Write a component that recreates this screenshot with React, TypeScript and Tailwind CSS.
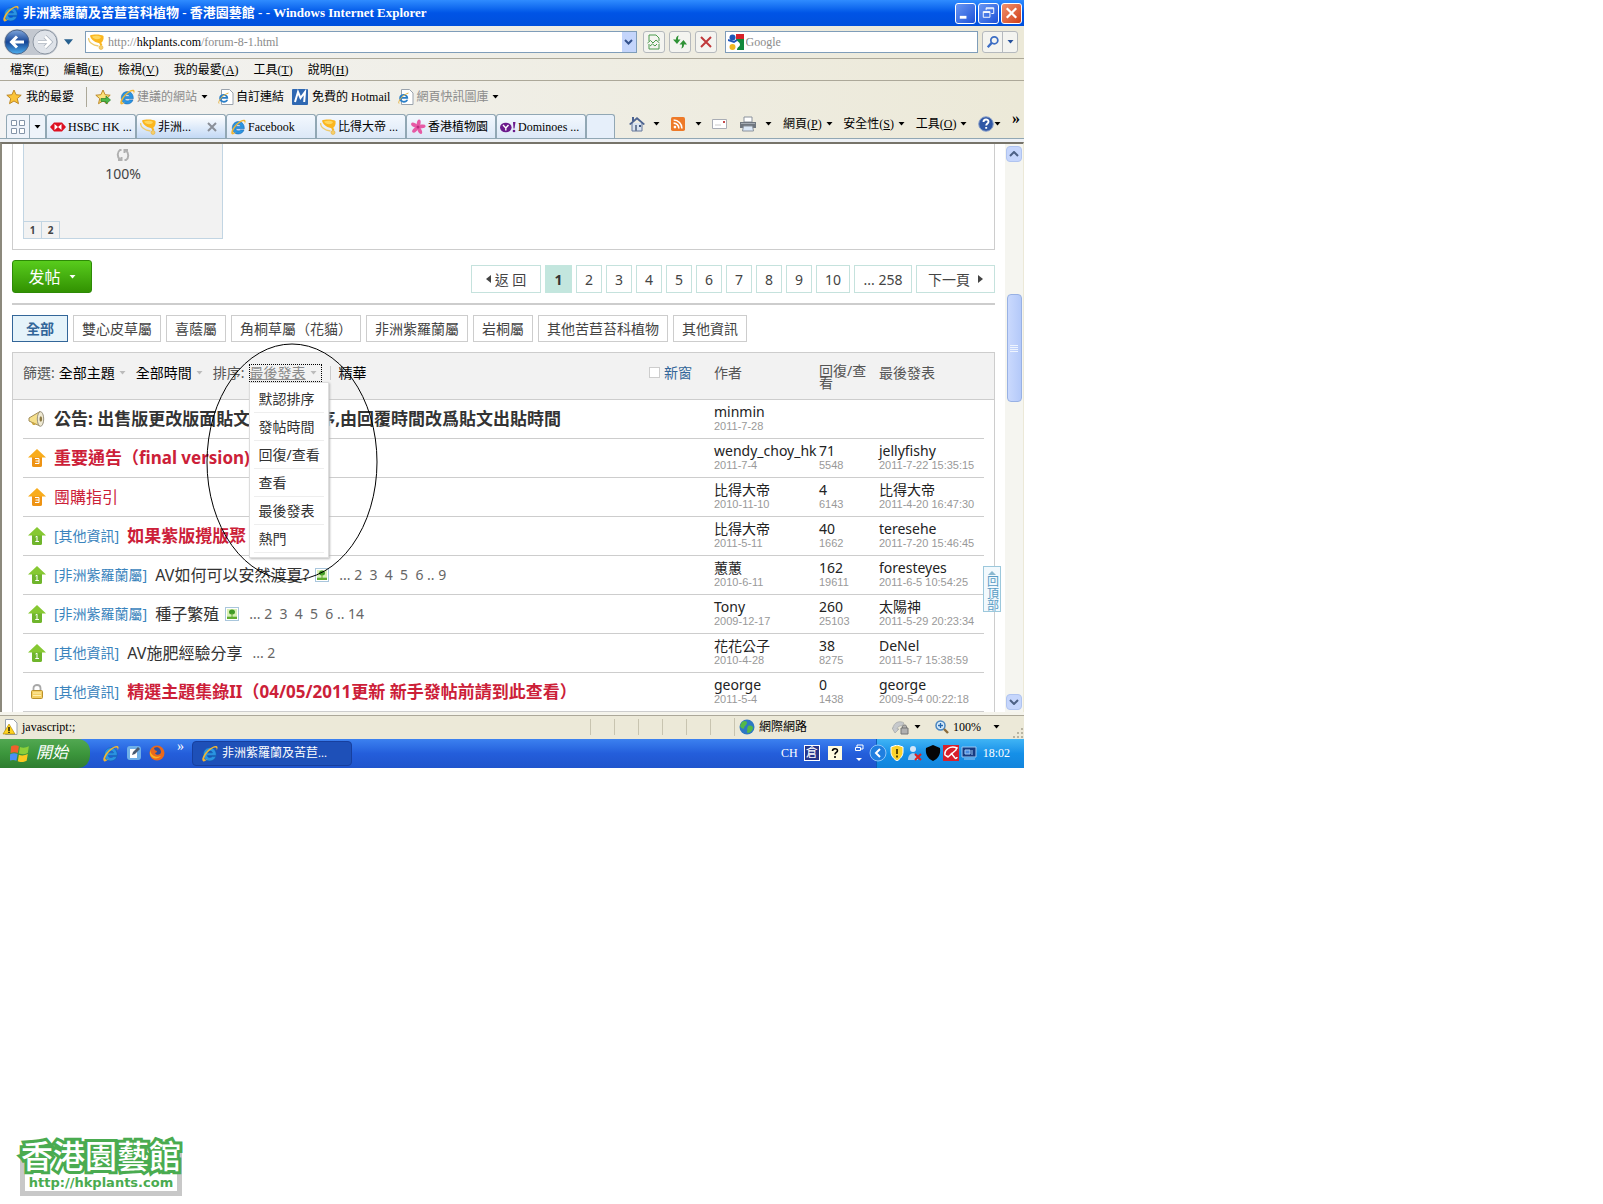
import type { ReactNode } from 'react';
import clsx from 'clsx';

const UI = "font-['Liberation_Serif','Noto_Sans_CJK_TC',serif]";
const WEB = "font-['Noto_Sans','Noto_Sans_CJK_TC',sans-serif]";

/* ---------- icons ---------- */

function IeIcon({ className = 'size-4' }: { className?: string }) {
  return (
    <svg viewBox="0 0 16 16" className={clsx('shrink-0', className)} aria-hidden="true">
      <path d="M14.300 9.800H5.900c.2 1.400 1.200 2 2.500 2 1 0 1.700-.3 2.100-.9h3.500c-.9 2.600-3 4.100-5.700 4.100-3.600 0-6-2.500-6-6.100s2.500-6.300 6.100-6.300c3.700 0 6.100 2.700 5.900 7.200zM5.900 7.400h4.900C10.600 6.300 9.700 5.700 8.400 5.700S6.200 6.300 5.900 7.400z" fill="#2a94e2" stroke="#1560a8" strokeWidth=".5" />
      <path d="M2 15.300C-.2 14 2.600 8.600 6.300 5 9.900 1.600 13.800 0 15.200 1.300c.8.900.3 2.300-.6 3.900.3-1.500.2-2.300-.5-2.700-1.400-.8-4.600 1-7.400 4-2.600 2.900-4.200 6-3.300 7 .5.500 1.500.3 2.700-.4-1.600 1.600-3.200 2.800-4.100 2.200z" fill="#f2b632" />
    </svg>
  );
}

function CupIcon() {
  return (
    <svg viewBox="0 0 16 16" className="size-4 shrink-0" aria-hidden="true">
      <path d="M2 1.500C5 0 13 0 15.500 2c.5 3-.5 5.500-2.500 7C9 9.500 3 6.500 2 1.500z" fill="#fbb61f" />
      <path d="M4 2.500c3-1 7-.8 9 .5-1 3-7 3-9-.5z" fill="#ffd75e" />
      <path d="M.5 4c0 4 4 7.500 10 8" fill="none" stroke="#efcb6e" strokeWidth="1.300" />
      <path d="M12 8.500l1.500 3" stroke="#fbb61f" strokeWidth="2" />
      <circle cx="13" cy="13.500" r="2" fill="#f6cf6a" stroke="#e6b03c" strokeWidth=".6" />
    </svg>
  );
}

function StarIcon({ add = false }: { add?: boolean }) {
  return (
    <svg viewBox="0 0 16 16" className="size-4 shrink-0" aria-hidden="true">
      <path d="M8 1l2.100 4.700 5.100.5-3.900 3.400 1.200 5.100L8 12l-4.500 2.700 1.200-5.100L.8 6.200l5.100-.5z" fill={add ? '#fbe27a' : '#fcc438'} stroke="#b8801c" strokeWidth=".9" />
      {add && <path d="M6 9.500h5V7l4.500 4-4.500 4v-2.500H6z" fill="#4cb848" stroke="#2b7d2a" strokeWidth=".7" />}
    </svg>
  );
}

function PageIcon({ children }: { children?: ReactNode }) {
  return (
    <svg viewBox="0 0 16 16" className="size-4 shrink-0" aria-hidden="true">
      <path d="M3.500.5h8L15 4v11.500H3.500z" fill="#fff" stroke="#9aa3ad" />
      {children || (
        <>
          <path d="M10.200 9.700H3.500c.3 2.600 3.800 2.800 4.600 1h2C9 15 1.200 14.600 1.200 9.300c0-5.600 9.200-5.700 9 .4zM3.600 8h4.300C7.500 6 4 6 3.600 8z" fill="#2a7fc8" />
          <path d="M1 14.500C-.5 13 4 6 10.500 4" stroke="#e5b544" fill="none" />
        </>
      )}
    </svg>
  );
}

function HotmailIcon() {
  return (
    <svg viewBox="0 0 16 16" className="size-4 shrink-0" aria-hidden="true">
      <rect width="16" height="16" rx="1" fill="#2f68b2" />
      <path d="M3 13L6 3l2.500 6L13 3l-.8 10" fill="none" stroke="#fff" strokeWidth="2" />
    </svg>
  );
}

function HsbcIcon() {
  return (
    <svg viewBox="0 0 16 16" className="size-4 shrink-0" aria-hidden="true">
      <path d="M4 3.500h8L16 8l-4 4.500H4L0 8z" fill="#dd1122" />
      <path d="M4.500 5L8 8l3.500-3v6L8 8l-3.500 3z" fill="#fff" />
    </svg>
  );
}

function FlowerIcon() {
  return (
    <svg viewBox="0 0 16 16" className="size-4 shrink-0" aria-hidden="true">
      {[10, 82, 154, 226, 298].map((a) => (
        <ellipse key={a} cx="8" cy="4.300" rx="1.900" ry="4" fill="#e65aa5" transform={`rotate(${a} 8 8)`} />
      ))}
      <circle cx="8" cy="8" r="1.500" fill="#c02a80" />
    </svg>
  );
}

function YahooIcon() {
  return (
    <svg viewBox="0 0 16 16" className="size-4 shrink-0" aria-hidden="true">
      <ellipse cx="5.800" cy="8.500" rx="5.800" ry="4.800" fill="#6b1a8c" />
      <path d="M3 6l2.800 3L8.500 6M5.800 9v2.500" stroke="#fff" strokeWidth="1.400" fill="none" />
      <path d="M13 3h2.500l-1 6.500h-1z" fill="#6b1a8c" />
      <circle cx="14" cy="12" r="1.300" fill="#6b1a8c" />
    </svg>
  );
}

function UpIcon({ level }: { level: 1 | 3 }) {
  const sticky = level === 3;
  return (
    <svg viewBox="0 0 18 18" className="size-[18px] shrink-0" aria-hidden="true">
      <path d="M9 0l9 8.500h-4V16c0 1.300-.7 2-2 2H6c-1.300 0-2-.7-2-2V8.500H0z" fill={sticky ? '#f8ac1c' : '#86c832'} />
      <path d="M4 8.500h10V16c0 1.300-.7 2-2 2H6c-1.300 0-2-.7-2-2z" fill={sticky ? '#ee9314' : '#6fb52c'} />
      {sticky ? (
        <path d="M7 9.500h4v5H7M7.500 12H11" fill="none" stroke="#fff" />
      ) : (
        <path d="M7.500 10l1.500-.8v5.300M7.300 14.500h3.700" fill="none" stroke="#fff" />
      )}
    </svg>
  );
}

function HornIcon() {
  return (
    <svg viewBox="0 0 18 18" className="size-[18px] shrink-0" aria-hidden="true">
      <path d="M1 8l11-6.500c2 3 2 11 0 14.500L1 11z" fill="#f6e08c" stroke="#a08c5a" />
      <ellipse cx="12.500" cy="9" rx="3.200" ry="7.300" fill="#efe9d2" stroke="#9a9482" />
      <ellipse cx="12.800" cy="9" rx="1.300" ry="2.800" fill="#8e7b45" />
      <path d="M3 12l2 3h2.500L7 13" fill="#cba640" />
    </svg>
  );
}

function LockIcon() {
  return (
    <svg viewBox="0 0 18 18" className="size-[18px] shrink-0" aria-hidden="true">
      <path d="M5.500 8V5C5.500 1 12.500 1 12.500 5v3" fill="none" stroke="#a8a8a8" strokeWidth="1.800" />
      <rect x="3.500" y="7.500" width="11" height="8" rx="1" fill="#f4cf63" stroke="#b98f2c" />
      <path d="M5 10h8M5 12.500h8" stroke="#fff0b0" />
    </svg>
  );
}

function ImageIcon() {
  return (
    <svg viewBox="0 0 14 14" className="size-3.5 shrink-0" aria-label="圖片附件" role="img">
      <rect x=".5" y=".5" width="13" height="13" fill="#fff" stroke="#a9c6dc" />
      <rect x="2" y="2" width="10" height="7" fill="#d8efb4" />
      <ellipse cx="7" cy="5" rx="3" ry="2.500" fill="#3f9a26" />
      <path d="M6.500 6h1v3.500h-1zM2 9.500h10V12H2z" fill="#5fae2e" />
    </svg>
  );
}

function Caret({ className = 'fill-black' }: { className?: string }) {
  return (
    <svg viewBox="0 0 7 4" className={clsx('h-1 w-[7px] shrink-0', className)} aria-hidden="true">
      <path d="M.5 0h6l-3 3.500z" />
    </svg>
  );
}

/* ---------- browser chrome ---------- */

function TitleBar() {
  const btn = 'flex size-[21px] items-center justify-center rounded-[3px] border border-white';
  return (
    <header className="flex h-[26px] items-center gap-0.5 bg-linear-to-b from-[#2f8cff] via-[#0054e6] to-[#0050dc] pr-0.5 pl-0.5">
      <IeIcon className="size-[17px]" />
      <h1 className="ml-0.5 flex-1 truncate text-[13px] font-bold text-white">非洲紫羅蘭及苦苣苔科植物 - 香港園藝館 - - Windows Internet Explorer</h1>
      <button aria-label="最小化" className={clsx(btn, 'bg-linear-to-br from-[#6a96f2] to-[#1d50d8]')}>
        <svg viewBox="0 0 20 20" className="size-5"><path d="M4 13h7v3H4z" fill="#fff" /></svg>
      </button>
      <button aria-label="還原" className={clsx(btn, 'bg-linear-to-br from-[#6a96f2] to-[#1d50d8]')}>
        <svg viewBox="0 0 20 20" className="size-5" fill="none" stroke="#fff"><path d="M7.500 7V4.500h8v6H13M7.500 5.500h8M4.500 8.500h7v6h-7zM4.500 9.500h7" /></svg>
      </button>
      <button aria-label="關閉" className={clsx(btn, 'bg-linear-to-br from-[#f0906c] to-[#d03c10]')}>
        <svg viewBox="0 0 20 20" className="size-5"><path d="M5 5l10 10M15 5L5 15" stroke="#fff" strokeWidth="2.400" /></svg>
      </button>
    </header>
  );
}

function AddressBar() {
  const tool = 'flex size-[22px] items-center justify-center rounded-[3px] border border-[#b5b9bd] bg-[#f4f4f0]';
  return (
    <div className="flex h-[33px] items-center border-b border-[#aca899] pr-1.5 pl-1">
      <div className="flex items-center gap-0.5 rounded-full bg-[#c3c8d0]">
        <button aria-label="上一頁">
          <svg viewBox="0 0 26 26" className="size-[26px]">
            <defs>
              <linearGradient id="back" x1="0" y1="0" x2="0" y2="1">
                <stop offset="0" stopColor="#7fa6dc" />
                <stop offset=".5" stopColor="#154596" />
                <stop offset="1" stopColor="#4fb0f0" />
              </linearGradient>
            </defs>
            <circle cx="13" cy="13" r="12" fill="url(#back)" stroke="#50688c" />
            <path d="M20 13H8M13 7.500L7.500 13l5.500 5.500" fill="none" stroke="#fff" strokeWidth="3" />
          </svg>
        </button>
        <button aria-label="下一頁">
          <svg viewBox="0 0 26 26" className="size-[26px]">
            <circle cx="13" cy="13" r="12" fill="#dfe3e9" stroke="#8d96a2" />
            <path d="M6 13h12M13 7.500l5.500 5.500-5.500 5.500" fill="none" stroke="#aab2bd" strokeWidth="4" />
            <path d="M6 13h12M13 7.500l5.500 5.500-5.500 5.500" fill="none" stroke="#fff" strokeWidth="2.500" />
          </svg>
        </button>
      </div>
      <button aria-label="最近的頁面" className="pr-1 pl-1.5">
        <svg viewBox="0 0 10 6" className="h-1.5 w-[9px]"><path d="M0 0h10L5 6z" fill="#27608f" /></svg>
      </button>
      <div className="ml-2 flex h-[22px] flex-1 items-center border border-[#7f9db9] bg-white pl-0.5">
        <CupIcon />
        <div className="ml-1 flex-1 text-[12px] text-[#8b8b8b]">
          http://<span className="text-black">hkplants.com</span>/forum-8-1.html
        </div>
        <button aria-label="網址清單" className="flex h-5 w-3.5 items-center justify-center bg-[#c4d5fb]">
          <svg viewBox="0 0 9 6" className="h-1.5 w-[9px]"><path d="M1 1l3.500 3.500L8 1" fill="none" stroke="#33518c" strokeWidth="2" /></svg>
        </button>
      </div>
      <div className="ml-1.5 flex gap-1">
        <button aria-label="相容性檢視" className={tool}>
          <svg viewBox="0 0 16 16" className="size-4" fill="none" stroke="#4a9a4c"><path d="M3 7V1h7l3 3v3M3 10v5h10v-5M1.500 9l3-2.500L7 9l3-3 3.500 3M4 12l2.500-2L9 12l2-2" /></svg>
        </button>
        <button aria-label="重新整理" className={tool}>
          <svg viewBox="0 0 16 16" className="size-4" fill="#2f9235"><path d="M7 1.500C4.500 2 4 3.500 4 5.500H1L5 10l3.500-4.500H6C6 4 6 2.500 7 1.500zM9 14.500c2.500-.5 3-2 3-4h3L11.500 6 7.500 10.500H10c0 1.500 0 3-1 4z" /></svg>
        </button>
        <button aria-label="停止" className={tool}>
          <svg viewBox="0 0 16 16" className="size-4"><path d="M3 3l10 10M13 3L3 13" stroke="#c0393b" strokeWidth="2" /></svg>
        </button>
      </div>
      <div className="ml-2 flex h-[22px] w-1/4 items-center border border-[#7f9db9] bg-white pl-0.5">
        <svg viewBox="0 0 16 16" className="size-4 shrink-0" aria-hidden="true">
          <path d="M8 0h8v5H8z" fill="#d8232a" />
          <path d="M16 5v11H9c0-3 3-3 3-5.500S8 7 8 5z" fill="#12893c" />
          <circle cx="4.500" cy="3.500" r="3" fill="#2158b8" />
          <circle cx="4.500" cy="13" r="3" fill="#f0b820" />
          <path d="M0 6l6 2 3-2" stroke="#2158b8" fill="none" strokeWidth="2" />
        </svg>
        <input aria-label="搜尋" placeholder="Google" className="ml-0.5 min-w-0 flex-1 text-[12px] outline-none placeholder:text-[#8b8b8b]" />
      </div>
      <div className="ml-1 flex h-[22px] rounded-[3px] border border-[#b5b9bd] bg-[#f4f4f0]">
        <button aria-label="開始搜尋" className="flex w-5 items-center justify-center border-r border-[#b5b9bd]">
          <svg viewBox="0 0 16 16" className="size-3.5" fill="none" stroke="#3c6dc4"><circle cx="9.500" cy="6" r="4" strokeWidth="2" /><path d="M6.500 9L2 14" strokeWidth="2.600" /></svg>
        </button>
        <button aria-label="搜尋選項" className="flex w-3.5 items-center justify-center"><Caret className="fill-[#27519c]" /></button>
      </div>
    </div>
  );
}

const MENUS = [
  ['檔案', 'F'],
  ['編輯', 'E'],
  ['檢視', 'V'],
  ['我的最愛', 'A'],
  ['工具', 'T'],
  ['說明', 'H'],
];

function MenuBar() {
  return (
    <nav className="flex h-[22px] items-center gap-[15px] border-b border-[#aca899] pl-2.5 text-[12px]">
      {MENUS.map(([label, key]) => (
        <button key={key}>{label}(<u>{key}</u>)</button>
      ))}
    </nav>
  );
}

function FavoritesBar() {
  return (
    <div className="flex h-8 items-center pl-1.5 text-[12px]">
      <button className="flex items-center gap-1"><StarIcon />我的最愛</button>
      <span className="mr-2 ml-3 h-5 w-px bg-[#aca899]" />
      <button aria-label="新增到我的最愛列"><StarIcon add /></button>
      <button className="ml-2 flex items-center gap-0.5 text-[#8b8b8b]">
        <IeIcon />建議的網站<Caret className="ml-0.5 fill-black" />
      </button>
      <a href="#" className="ml-2.5 flex items-center gap-0.5"><PageIcon />自訂連結</a>
      <a href="#" className="ml-2 flex items-center gap-1"><HotmailIcon />免費的 Hotmail</a>
      <button className="ml-2 flex items-center gap-0.5 text-[#8b8b8b]">
        <PageIcon />網頁快訊圖庫<Caret className="ml-0.5 fill-black" />
      </button>
    </div>
  );
}

const TABS = [
  { label: 'HSBC HK ...', icon: <HsbcIcon /> },
  { label: '非洲...', icon: <CupIcon />, active: true },
  { label: 'Facebook', icon: <IeIcon /> },
  { label: '比得大帝 ...', icon: <CupIcon /> },
  { label: '香港植物園', icon: <FlowerIcon /> },
  { label: 'Dominoes ...', icon: <YahooIcon /> },
];

function TabRow() {
  const tab = 'flex h-6 items-center rounded-t-[3px] border border-b-0 border-[#91a7b4]';
  return (
    <div className="flex items-end border-b border-[#91a7b4] pl-1.5 text-[12px]">
      <div className={clsx(tab, 'w-10 bg-[#eef3fa]')}>
        <button aria-label="快速索引標籤" className="flex h-full flex-1 items-center justify-center border-r border-[#91a7b4]">
          <svg viewBox="0 0 16 16" className="size-4" fill="#fff" stroke="#8494a8"><path d="M1.500 1.500h5v5h-5zM9.500 1.500h5v5h-5zM1.500 9.500h5v5h-5zM9.500 9.500h5v5h-5z" /></svg>
        </button>
        <button aria-label="索引標籤清單" className="flex w-[15px] justify-center"><Caret /></button>
      </div>
      {TABS.map((t) => (
        <div key={t.label} className={clsx(tab, 'w-[90px] gap-0.5 overflow-hidden pl-[3px]', t.active ? 'bg-linear-to-b from-white to-[#c3d9f5]' : 'bg-linear-to-b from-[#f3f8fe] to-[#dce8f7]')}>
          <button className="flex items-center gap-0.5 whitespace-nowrap">{t.icon}{t.label}</button>
          {t.active && (
            <button aria-label="關閉索引標籤" className="mr-2 ml-auto">
              <svg viewBox="0 0 10 10" className="size-2.5"><path d="M1 1l8 8M9 1L1 9" stroke="#8a8f98" strokeWidth="2" /></svg>
            </button>
          )}
        </div>
      ))}
      <button aria-label="新索引標籤" className={clsx(tab, 'w-[29px] bg-[#e6effa]')} />
      <div className="ml-3.5 flex h-[25px] flex-1 items-center justify-between pr-1 pb-1">
        <button aria-label="首頁" className="flex items-center gap-2">
          <svg viewBox="0 0 16 16" className="size-4"><path d="M3 7v8h10V7" fill="#d9e3f0" stroke="#65779a" /><path d="M0 8l8-7 8 7-1.500 1L8 3.500 1.500 9z" fill="#4c6390" /><path d="M3 1h2v4H3z" fill="#4c6390" /><path d="M6 9h2v6H6z" fill="#6f7f99" /><path d="M10 9h2v2h-2z" fill="#3e557f" /></svg>
          <Caret />
        </button>
        <button aria-label="摘要" className="flex items-center gap-2.5">
          <svg viewBox="0 0 16 16" className="size-3.5"><rect width="16" height="16" rx="2" fill="#ee7a28" /><circle cx="4.500" cy="11.500" r="1.500" fill="#fff" /><path d="M3 7a6 6 0 016 6M3 3.500A9.500 9.500 0 0112.500 13" stroke="#fff" strokeWidth="1.800" fill="none" /></svg>
          <Caret />
        </button>
        <button aria-label="讀取郵件">
          <svg viewBox="0 0 16 12" className="h-3 w-4"><path d="M.5 1.500h14v9H.5z" fill="#fff" stroke="#a9adb5" /><path d="M11 3h2v2h-2z" fill="#c64a4a" /><path d="M3 7h6" stroke="#ccc" /></svg>
        </button>
        <button aria-label="列印" className="flex items-center gap-2">
          <svg viewBox="0 0 18 16" className="h-4 w-[18px]"><path d="M5 1h8v5H5z" fill="#fff" stroke="#8b929c" /><path d="M1 6h16v6H1z" fill="#70777f" /><path d="M2 7h14v1H2z" fill="#a4abb3" /><path d="M4.500 10h9l1 5h-11z" fill="#dbe8f7" stroke="#8b929c" /></svg>
          <Caret />
        </button>
        <button className="flex items-center gap-1"><span>網頁(<u>P</u>)</span><Caret /></button>
        <button className="flex items-center gap-1"><span>安全性(<u>S</u>)</span><Caret /></button>
        <button className="flex items-center gap-1"><span>工具(<u>O</u>)</span><Caret /></button>
        <button aria-label="說明" className="flex items-center">
          <svg viewBox="0 0 16 16" className="size-4"><circle cx="8" cy="8" r="7.300" fill="#2f57a5" stroke="#8fa4cc" /><path d="M5.500 6c0-3.300 5-3.300 5-.3 0 1.800-2.300 1.800-2.300 3.800M8.200 11v1.800" fill="none" stroke="#fff" strokeWidth="1.900" /></svg>
          <Caret />
        </button>
        <button aria-label="其他命令" className="self-start text-[16px] leading-3 font-bold">»</button>
      </div>
    </div>
  );
}

/* ---------- forum page ---------- */

function Pagination() {
  const cell = 'flex h-7 items-center justify-center border border-[#c5e2dd] bg-white';
  return (
    <nav aria-label="分頁" className="flex gap-1 text-[14px] text-[#444]">
      <a href="#" className={clsx(cell, 'w-[70px] gap-1 border-[#c2d5e3]')}>
        <svg viewBox="0 0 5 8" className="h-2 w-[5px]"><path d="M5 0v8L0 4z" fill="#444" /></svg>
        返 回
      </a>
      <strong className="flex h-7 w-[27px] items-center justify-center bg-[#c3e6de] text-[#333]">1</strong>
      {[2, 3, 4, 5, 6, 7, 8, 9].map((n) => (
        <a href="#" key={n} className={clsx(cell, 'w-[26px]')}>{n}</a>
      ))}
      <a href="#" className={clsx(cell, 'w-[34px]')}>10</a>
      <a href="#" className={clsx(cell, 'w-[58px]')}>... 258</a>
      <a href="#" className={clsx(cell, 'w-[79px] gap-2')}>
        下一頁
        <svg viewBox="0 0 5 8" className="h-2 w-[5px]"><path d="M0 0v8l5-4z" fill="#444" /></svg>
      </a>
    </nav>
  );
}

const CATEGORIES = ['雙心皮草屬', '喜蔭屬', '角桐草屬（花貓）', '非洲紫羅蘭屬', '岩桐屬', '其他苦苣苔科植物', '其他資訊'];
const SORTS = ['默認排序', '發帖時間', '回復/查看', '查看', '最後發表', '熱門'];

type Thread = {
  icon: ReactNode;
  tag?: string;
  title: string;
  style?: 'bold' | 'red' | 'redBold';
  image?: boolean;
  pages?: string;
  author: string;
  date: string;
  replies?: number;
  views?: number;
  last?: string;
  lastDate?: string;
};

const THREADS: Thread[] = [
  { icon: <HornIcon />, title: '公告: 出售版更改版面貼文的排列次序,由回覆時間改爲貼文出貼時間', style: 'bold', author: 'minmin', date: '2011-7-28' },
  { icon: <UpIcon level={3} />, title: '重要通告（final version)', style: 'redBold', author: 'wendy_choy_hk', date: '2011-7-4', replies: 71, views: 5548, last: 'jellyfishy', lastDate: '2011-7-22 15:35:15' },
  { icon: <UpIcon level={3} />, title: '團購指引', style: 'red', author: '比得大帝', date: '2010-11-10', replies: 4, views: 6143, last: '比得大帝', lastDate: '2011-4-20 16:47:30' },
  { icon: <UpIcon level={1} />, tag: '其他資訊', title: '如果紫版攪版聚', style: 'redBold', author: '比得大帝', date: '2011-5-11', replies: 40, views: 1662, last: 'teresehe', lastDate: '2011-7-20 15:46:45' },
  { icon: <UpIcon level={1} />, tag: '非洲紫羅蘭屬', title: 'AV如何可以安然渡夏?', image: true, pages: '... 2  3  4  5  6 .. 9', author: '蕙蕙', date: '2010-6-11', replies: 162, views: 19611, last: 'foresteyes', lastDate: '2011-6-5 10:54:25' },
  { icon: <UpIcon level={1} />, tag: '非洲紫羅蘭屬', title: '種子繁殖', image: true, pages: '... 2  3  4  5  6 .. 14', author: 'Tony', date: '2009-12-17', replies: 260, views: 25103, last: '太陽神', lastDate: '2011-5-29 20:23:34' },
  { icon: <UpIcon level={1} />, tag: '其他資訊', title: 'AV施肥經驗分享', pages: '... 2', author: '花花公子', date: '2010-4-28', replies: 38, views: 8275, last: 'DeNel', lastDate: '2011-5-7 15:38:59' },
  { icon: <LockIcon />, tag: '其他資訊', title: '精選主題集錄II（04/05/2011更新 新手發帖前請到此查看）', style: 'redBold', author: 'george', date: '2011-5-4', replies: 0, views: 1438, last: 'george', lastDate: '2009-5-4 00:22:18' },
];

function Stat({ top, bottom }: { top?: ReactNode; bottom?: ReactNode }) {
  return (
    <td className="border-b border-[#cdcdcd] p-0 align-top whitespace-nowrap">
      <div className="pt-1 text-[14px] leading-4 text-[#222]">{top}</div>
      <div className="font-['Liberation_Sans',sans-serif] text-[11px] leading-3 text-[#999]">{bottom}</div>
    </td>
  );
}

function ThreadRow({ thread }: { thread: Thread }) {
  const { style } = thread;
  return (
    <tr className="h-[39px]">
      <td />
      <td className="border-b border-[#cdcdcd] p-0">
        <div className="flex items-center pl-[5px] whitespace-nowrap">
          {thread.icon}
          {thread.tag && <a href="#" className="ml-2 text-[14px] text-[#3a84bd]">[{thread.tag}]</a>}
          <a
            href="#"
            className={clsx(
              'ml-2',
              style === 'bold' && 'text-[17px] font-bold text-[#333]',
              style === 'redBold' && 'text-[17px] font-bold text-[#cc2038]',
              style === 'red' && 'text-[16px] text-[#cc2038]',
              !style && 'text-[16px] text-[#333]',
            )}
          >
            {thread.title}
          </a>
          {thread.image && <span className="ml-1.5"><ImageIcon /></span>}
          {thread.pages && <span className="ml-2.5 text-[14px] whitespace-pre text-[#666]">{thread.pages}</span>}
        </div>
      </td>
      <Stat top={thread.author} bottom={thread.date} />
      <Stat top={thread.replies} bottom={thread.views} />
      <Stat top={thread.last} bottom={thread.lastDate} />
      <td />
    </tr>
  );
}

function SortMenu() {
  return (
    <div className="relative ml-1">
      <button aria-expanded="true" className="flex items-center gap-1 border border-dotted border-black pr-1 leading-4 text-[#8a8a8a]">
        <span className="underline">最後發表</span>
        <Caret className="fill-[#bbb]" />
      </button>
      <ul className="absolute top-[18px] left-0 z-10 w-20 border border-[#ddd] bg-white px-1 pt-0.5 pb-1 text-[#333] shadow-[1px_1px_2px_#bbb]">
        {SORTS.map((s) => (
          <li key={s} className="h-7 border-b border-[#eee]">
            <a href="#" className="block pl-[5px] leading-7">{s}</a>
          </li>
        ))}
      </ul>
    </div>
  );
}

function ThreadTable() {
  return (
    <div className="relative mt-2.5 border border-b-0 border-[#cdcdcd]">
      <table className="w-full table-fixed border-collapse">
        <colgroup>
          <col className="w-2.5" />
          <col />
          <col className="w-[105px]" />
          <col className="w-[60px]" />
          <col className="w-[105px]" />
          <col className="w-2.5" />
        </colgroup>
        <thead className="border-b border-[#cdcdcd] bg-[#f2f2f2] text-left text-[14px] text-[#555]">
          <tr className="h-[46px]">
            <th />
            <th className="p-0 pb-1.5 font-normal">
              <div className="flex items-center whitespace-nowrap">
                <span>篩選:</span>
                <button className="ml-1 flex items-center gap-1 text-black">全部主題<Caret className="fill-[#bbb]" /></button>
                <button className="ml-2.5 flex items-center gap-1 text-black">全部時間<Caret className="fill-[#bbb]" /></button>
                <span className="ml-2.5">排序:</span>
                <SortMenu />
                <span className="mx-2 h-3.5 w-px bg-[#ccc]" />
                <a href="#" className="text-black">精華</a>
                <label className="mr-[22px] ml-auto flex items-center gap-1 text-[#336699]">
                  <input type="checkbox" className="size-[11px] appearance-none border border-[#cdcdcd] bg-white" />
                  新窗
                </label>
              </div>
            </th>
            <th className="p-0 pb-1.5 font-normal">作者</th>
            <th className="p-0 pt-3 pr-2.5 align-top leading-3 font-normal">回復/查看</th>
            <th className="p-0 pb-1.5 font-normal">最後發表</th>
            <th />
          </tr>
        </thead>
        <tbody>
          {THREADS.map((t) => (
            <ThreadRow key={t.title} thread={t} />
          ))}
        </tbody>
      </table>
      {/* hand-drawn ring round the sort menu */}
      <svg viewBox="0 0 172 238" className="pointer-events-none absolute -top-2.5 left-[193px] z-20 h-[238px] w-[172px]" aria-hidden="true">
        <ellipse cx="86" cy="119" rx="85" ry="118" fill="none" stroke="#000" />
      </svg>
    </div>
  );
}

function Forum() {
  return (
    <main className={clsx('relative min-w-0 flex-1 bg-white pr-2.5 pl-2.5 text-[#444]', WEB)}>
      <section className="border border-t-0 border-[#cdcdcd] px-2.5 pb-2.5">
        <div className="flex h-[95px] w-[200px] flex-col items-center border border-t-0 border-[#c2d5e3] bg-[#f2f2f2] text-[14px]">
          <svg viewBox="0 0 14 14" className="mt-1 size-3.5" fill="none" stroke="#b0b0b0" strokeWidth="2" aria-hidden="true">
            <path d="M5.500 2H4C1 4 1 9 4 11.500M2 12h3.500V9M8.500 12H10c3-2 3-7 0-9.500M12 2H8.500v3" />
          </svg>
          <div className="leading-6">100%</div>
          <div className="mt-auto flex self-start text-[10px] font-bold">
            <a href="#" className="flex h-[17px] w-[18px] items-center justify-center border-t border-r border-[#c2d5e3]">1</a>
            <a href="#" className="flex h-[17px] w-[18px] items-center justify-center border-t border-r border-[#c2d5e3]">2</a>
          </div>
        </div>
      </section>
      <div className="mt-2.5 flex items-end justify-between border-b-2 border-[#cdcdcd] pb-2.5">
        <button className="flex h-[33px] w-20 items-center justify-center gap-2 rounded-[3px] border border-[#2d8a06] bg-linear-to-b from-[#58cc1c] to-[#329202] text-[16px] text-white">
          <span>发帖</span>
          <Caret className="fill-white" />
        </button>
        <Pagination />
      </div>
      <div className="mt-2.5 flex gap-[5px] text-[14px]">
        <a href="#" className="flex h-[27px] items-center border border-[#336699] bg-[#e5f3fa] px-[13px] font-bold text-[#336699]">全部</a>
        {CATEGORIES.map((c) => (
          <a href="#" key={c} className="flex h-[27px] items-center border border-[#cdcdcd] px-2 whitespace-nowrap">{c}</a>
        ))}
      </div>
      <ThreadTable />
      <a href="#" className="absolute right-1 bottom-[100px] z-20 flex w-[18px] flex-col items-center border border-[#9cc8dc] bg-[#f2f9fd] pt-1 text-[12px] text-[#5a9cc4]">
        <svg viewBox="0 0 8 4" className="h-1 w-2"><path d="M0 4l4-4 4 4z" fill="#8ab8d0" /></svg>
        <span className="leading-[13px] [writing-mode:vertical-rl]">回頂部</span>
      </a>
    </main>
  );
}

function ScrollBar() {
  const arrow = 'flex size-4 items-center justify-center rounded-sm border border-[#b0c4f0] bg-[#c6d6fc]';
  return (
    <div className="flex w-[18px] flex-col items-center bg-[#f5f5f0] py-0.5">
      <button aria-label="向上捲動" className={arrow}>
        <svg viewBox="0 0 10 6" className="h-1.5 w-2.5"><path d="M1 5l4-4 4 4" fill="none" stroke="#4d6185" strokeWidth="2" /></svg>
      </button>
      <div className="flex-30" />
      <div className="flex w-[15px] flex-24 flex-col items-center justify-center gap-px rounded-sm border border-[#98b1e4] bg-linear-to-r from-[#cad9fd] to-[#b4c9f9]">
        {[0, 1, 2, 3].map((i) => <span key={i} className="h-px w-2 bg-[#eef4fe]" />)}
      </div>
      <div className="flex-66" />
      <button aria-label="向下捲動" className={arrow}>
        <svg viewBox="0 0 10 6" className="h-1.5 w-2.5"><path d="M1 1l4 4 4-4" fill="none" stroke="#4d6185" strokeWidth="2" /></svg>
      </button>
    </div>
  );
}

function StatusBar() {
  return (
    <footer className="flex h-6 items-center border-t border-[#aca899] bg-[#ece9d8] pl-0.5 text-[12px]">
      <PageIcon>
        <path d="M7 5l6 10H1z" fill="#ffd21f" stroke="#a88200" strokeWidth=".6" />
        <path d="M7 8v4M7 12.800v1.200" stroke="#000" strokeWidth="1.300" />
      </PageIcon>
      <span className="ml-1 flex-1">javascript:;</span>
      <div className="flex">
        {[0, 1, 2, 3, 4, 5].map((i) => <span key={i} className="h-4 w-6 border-l border-[#c8c4b0]" />)}
      </div>
      <div className="flex w-[158px] items-center gap-1 border-l border-[#c8c4b0] pl-1">
        <svg viewBox="0 0 16 16" className="size-4"><circle cx="8" cy="8" r="7.500" fill="#2d78c4" /><path d="M3 3c3-2 5-1 5 1S5 7 5 9s-3 0-4-2zM9 7c3-1 5 0 5 2s-3 5-5 5 0-3-1-4z" fill="#54b848" /></svg>
        網際網路
      </div>
      <button aria-label="安全性設定" className="flex w-[43px] items-center gap-1">
        <svg viewBox="0 0 18 16" className="h-4 w-[18px]"><path d="M1 9a7 7 0 0111-5l-2 3a4 4 0 00-5 3H7l-4 4-3-5z" fill="#c6c9cc" stroke="#9a9da0" strokeWidth=".6" /><path d="M9 9h7v6H9zM10.500 9V7.500c0-2 4-2 4 0V9" fill="#b0b0b0" stroke="#777" /></svg>
        <Caret />
      </button>
      <button className="flex items-center gap-1">
        <svg viewBox="0 0 14 14" className="size-3.5"><circle cx="5.500" cy="5.500" r="4.500" fill="#d8ecfb" stroke="#4a86c0" strokeWidth="1.500" /><path d="M9 9l4 4" stroke="#8a6a3a" strokeWidth="2.400" /><path d="M3 5.500h5M5.500 3v5" stroke="#2668b0" strokeWidth="1.300" /></svg>
        100%
        <Caret className="ml-2 fill-black" />
      </button>
      <svg viewBox="0 0 12 12" className="ml-3 size-3 self-end" fill="#b8b4a2"><path d="M9 1h2v2H9zM9 5h2v2H9zM9 9h2v2H9zM5 5h2v2H5zM5 9h2v2H5zM1 9h2v2H1z" /></svg>
    </footer>
  );
}

function TaskBar() {
  return (
    <footer className="flex h-[29px] items-center bg-linear-to-b from-[#3c81f0] via-[#245edb] to-[#1f54cc] text-[12px] text-white">
      <button className="flex h-full w-[90px] items-center gap-1.5 rounded-r-xl bg-linear-to-b from-[#52a852] via-[#3c963c] to-[#2f7d30] pl-2.5 text-[16px] italic">
        <svg viewBox="0 0 18 16" className="h-[18px] w-5">
          <path d="M1 2c3-1.500 5-1 7 0L7 8C5 7 3 7 .5 8z" fill="#f0602c" />
          <path d="M9 2.500c2 1 5 1 8-.5l-1 6c-3 1.500-5 1.500-8 .5z" fill="#8ccf3a" />
          <path d="M.3 9c2.500-1 4.500-1 6.500 0l-1 6c-2-1-4-1-6.500 0z" fill="#4a8ef5" />
          <path d="M8 9.500c2 1 5 1 8-.5l-1 6c-3 1.500-5 1.500-8 .5z" fill="#fbc820" />
        </svg>
        開始
      </button>
      <div className="ml-3 flex items-center gap-[7px]">
        <button aria-label="Internet Explorer"><IeIcon className="size-[17px]" /></button>
        <button aria-label="顯示桌面">
          <svg viewBox="0 0 16 16" className="size-4"><rect x="1" y="1" width="14" height="14" rx="3" fill="#6fb0e8" /><path d="M4 4h7v9H4z" fill="#fff" /><path d="M6 10l1-3 5-5 2 2-5 5z" fill="#4a5a70" /></svg>
        </button>
        <button aria-label="Firefox">
          <svg viewBox="0 0 16 16" className="size-4"><circle cx="8" cy="8" r="7.500" fill="#e8681c" /><path d="M5 3c3-2 7 0 7 4 0 3-5 4-6 1 1 0 2-1 2-2-1 0-3-1-3-3z" fill="#2d4fa0" /><path d="M1 5c1 6 6 8 11 6-3 4-10 3-11-2z" fill="#fbb020" /></svg>
        </button>
      </div>
      <span className="ml-3 self-start text-[14px] leading-4">»</span>
      <button className="ml-2 flex h-[25px] w-40 items-center gap-1 rounded-sm border border-[#173f9e] bg-[#1e50b8] pl-2">
        <IeIcon className="size-[17px]" />非洲紫羅蘭及苦苣...
      </button>
      <div className="ml-auto flex items-center gap-1.5 pr-3">
        <span>CH</span>
        <span className="flex size-4 items-center justify-center border border-white bg-[#26358c] text-[12px] leading-3">倉</span>
        <svg viewBox="0 0 14 14" className="ml-0.5 size-3.5"><path d="M0 0h14v14H0z" fill="#fffbe0" /><path d="M4.500 5c0-3 5-3 5-.3C9.500 6.500 7 6.500 7 8.500M7 10v2" fill="none" stroke="#000" strokeWidth="1.600" /></svg>
        <svg viewBox="0 0 10 18" className="ml-1.5 h-[18px] w-2.5" fill="none" stroke="#fff"><path d="M3 3V1h6v4H7M1.500 3.500h5v3h-5z" /><path d="M2 14h6l-3 3z" fill="#fff" stroke="none" /></svg>
      </div>
      <div className="flex h-full items-center gap-0.5 border-l border-[#0d5cb8] bg-linear-to-b from-[#3fb4f5] via-[#1590e8] to-[#1284dc] pr-3.5">
        <button aria-label="顯示隱藏的圖示" className="-ml-2">
          <svg viewBox="0 0 18 18" className="size-[18px]"><circle cx="9" cy="9" r="8" fill="#1f7fe0" stroke="#8cc4f8" /><path d="M11 5L7 9l4 4" fill="none" stroke="#fff" strokeWidth="2" /></svg>
        </button>
        <svg viewBox="0 0 16 16" className="size-4"><path d="M8 0l6 2v5c0 4-3 7-6 9-3-2-6-5-6-9V2z" fill="#fcd32c" stroke="#fff" /><path d="M8 4v5M8 10.500v2" stroke="#5a4800" strokeWidth="2" /></svg>
        <svg viewBox="0 0 16 16" className="size-4"><circle cx="6" cy="4" r="3" fill="#d5e6f8" /><path d="M1 15c0-9 10-9 10 0z" fill="#a8cdee" /><path d="M8 9l6 6M14 9l-6 6" stroke="#e02020" strokeWidth="2" /></svg>
        <svg viewBox="0 0 16 16" className="size-4"><path d="M8 0l7 3c1 6-2 11-7 13C3 14 0 9 1 3z" fill="#050505" /></svg>
        <svg viewBox="0 0 16 16" className="size-4"><path d="M0 0h16v16H0z" fill="#d8202c" /><path d="M2 10C1 5 7 0 14 3c-1 1-1 1-1 2L5 12c-1-1-2-1-3-2z" fill="none" stroke="#fff" strokeWidth="1.500" /><path d="M8 8l4 5c1 1 2 0 2-1" fill="none" stroke="#fff" strokeWidth="1.500" /></svg>
        <svg viewBox="0 0 16 16" className="size-4"><path d="M1 2h14v10H1z" fill="#173a80" stroke="#9cc8f4" /><path d="M4 5h5v4H4zM11 5v5" fill="#4a8ae0" stroke="#9cc8f4" /><path d="M3 14h11" stroke="#9cc8f4" /></svg>
        <span className="ml-1">18:02</span>
      </div>
    </footer>
  );
}

export default function App() {
  return (
    <div className="flex min-h-screen flex-col items-start justify-between bg-white">
      <div className={clsx('w-full max-w-5xl text-black', UI)}>
        <TitleBar />
        <div className="bg-linear-to-r from-[#f3f3f3] to-[#ece9d8]">
          <AddressBar />
          <MenuBar />
          <FavoritesBar />
          <TabRow />
          <div className="h-[3px] bg-[#eef1f5]" />
        </div>
        <div className="flex border-t-2 border-r border-l-2 border-t-[#77746a] border-r-[#ece9d8] border-l-[#8c897c]">
          <Forum />
          <ScrollBar />
        </div>
        <div className="h-[3px] bg-[#f5f4ec]" />
        <StatusBar />
        <TaskBar />
      </div>
      <div className="mb-2 ml-5 flex w-[162px] flex-col items-center">
        <div className="z-10 text-[32px] leading-8 font-medium whitespace-nowrap text-white [-webkit-text-stroke:6px_#4aab50] [paint-order:stroke_fill] font-['Noto_Sans_CJK_TC',sans-serif]">香港園藝館</div>
        <div className="-mt-6 w-full border-[5px] border-[#c8c8c8] pt-6 text-center font-['DejaVu_Sans',sans-serif] text-[13px] leading-4 font-bold text-[#4aab50]">http://hkplants.com</div>
      </div>
    </div>
  );
}
